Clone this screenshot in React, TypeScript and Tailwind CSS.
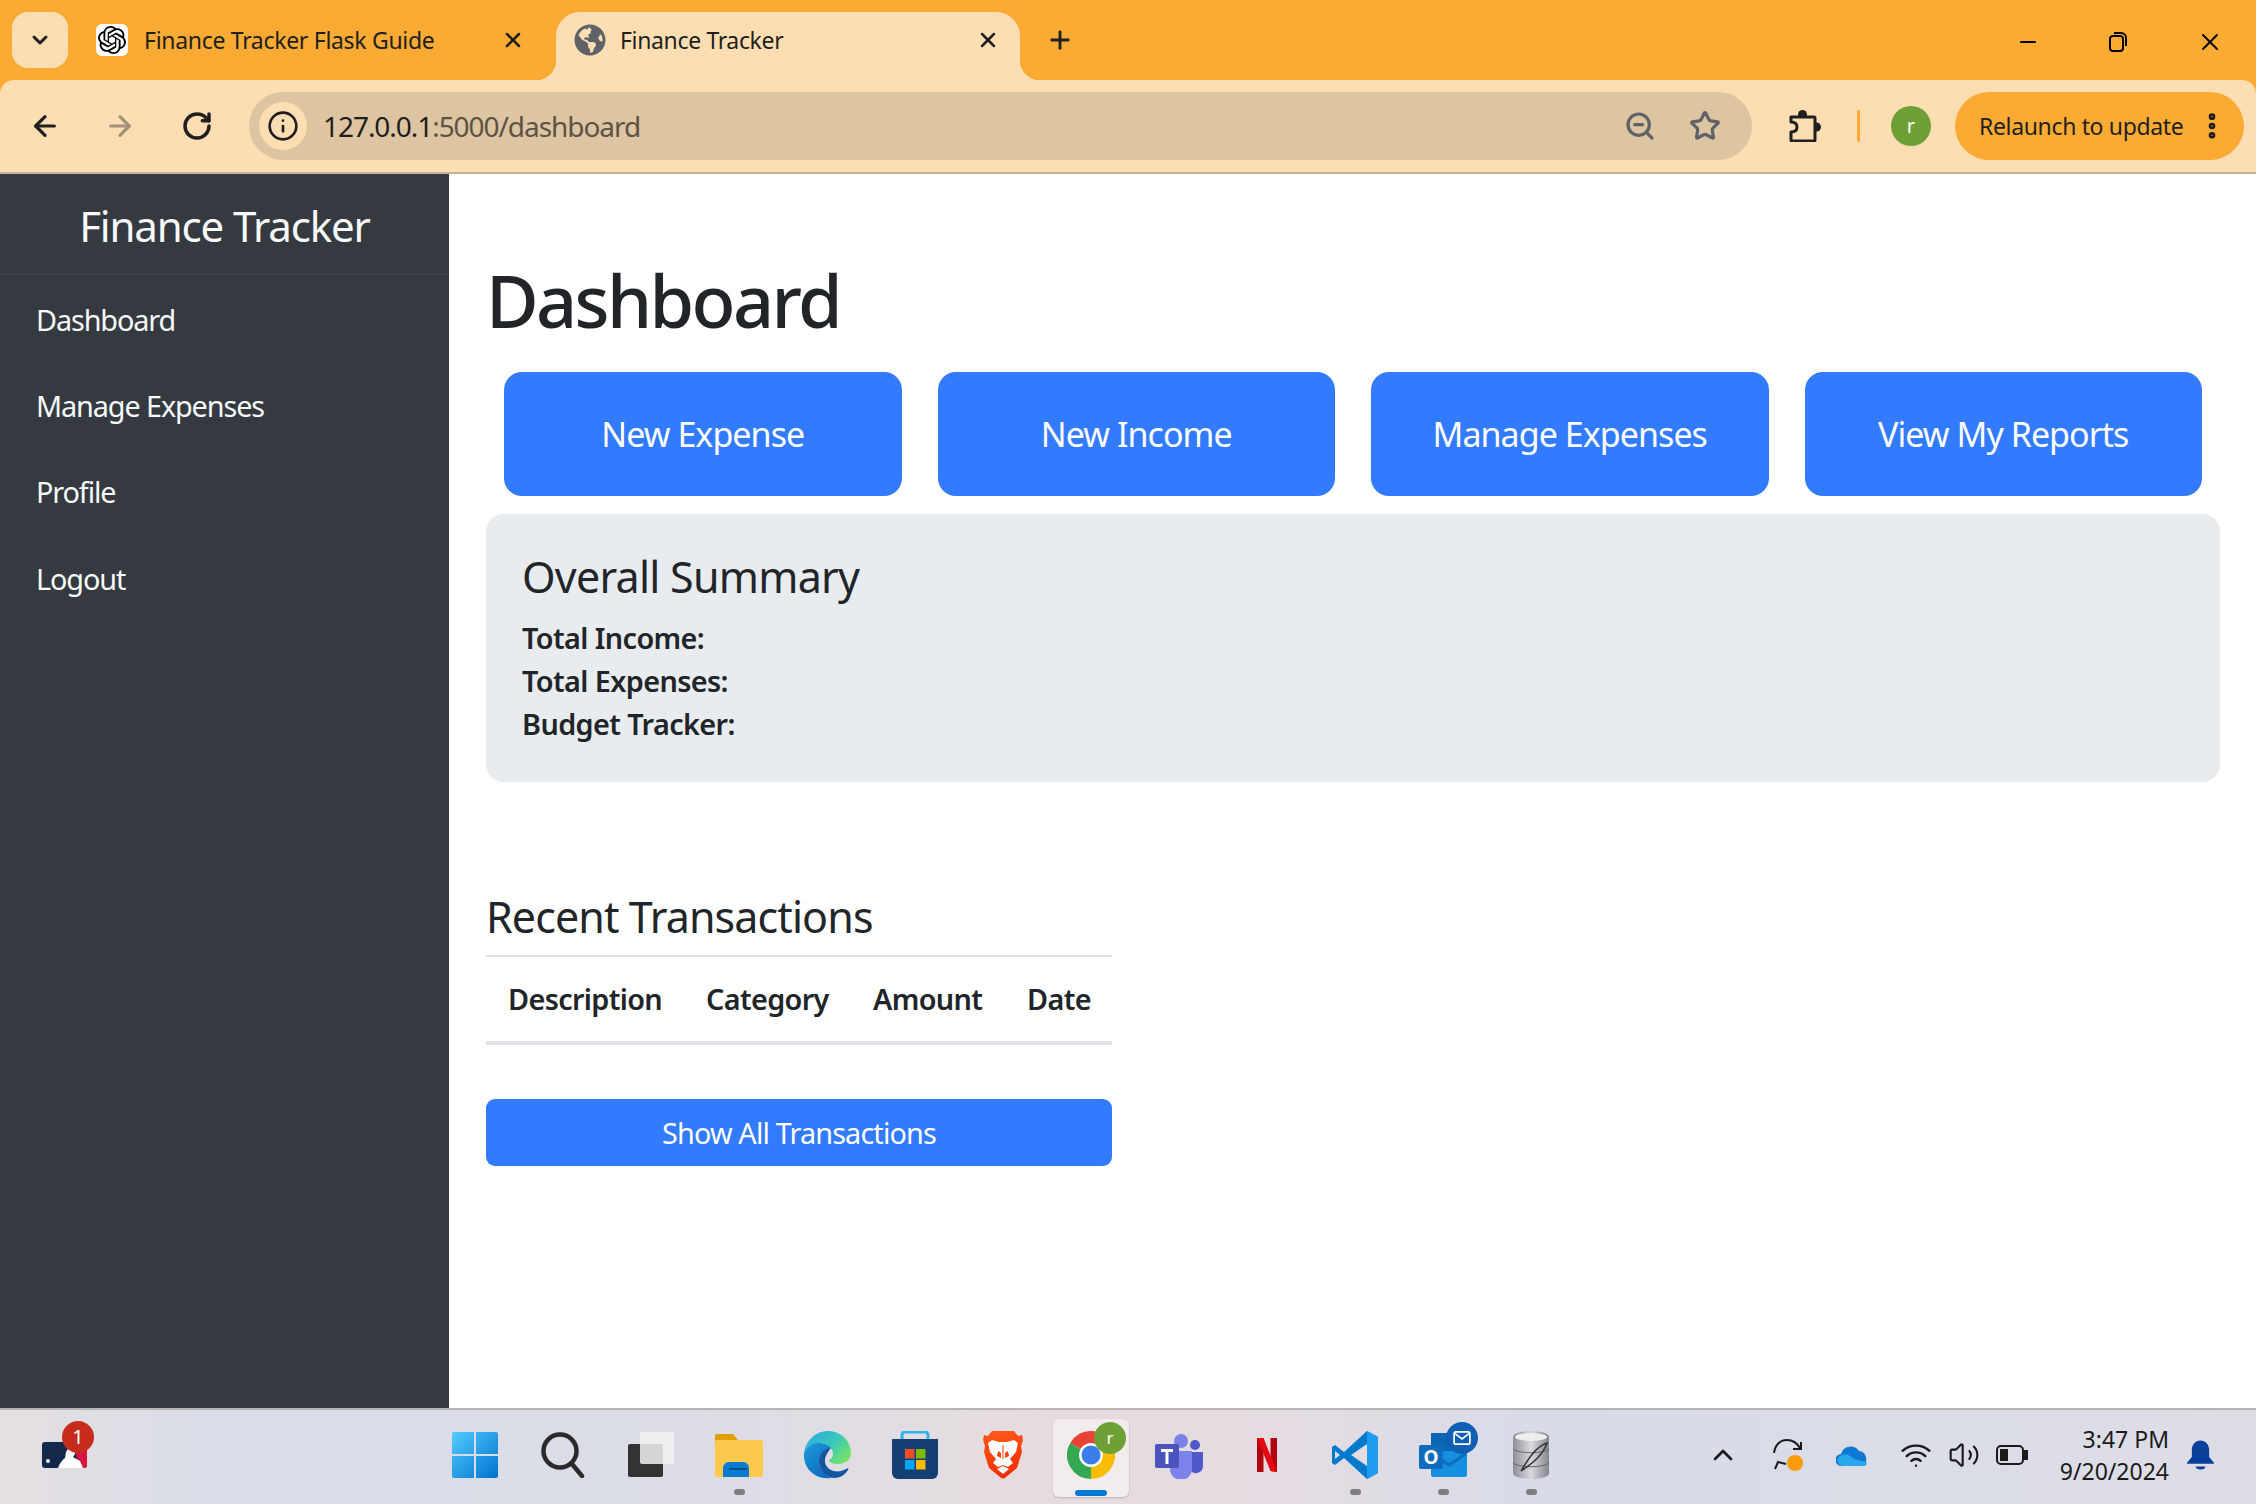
import { ReactNode } from "react";
import {
  ArrowLeft,
  ArrowRight,
  ChevronDown,
  ChevronUp,
  EllipsisVertical,
  Info,
  Minus,
  Plus,
  RotateCw,
  Star,
  Volume2,
  Wifi,
  X,
  ZoomOut,
} from "lucide-react";
import { SiOpenai } from "react-icons/si";
import { FaGlobeAmericas } from "react-icons/fa";

const TabCorners = () => (
  <>
    <span className="absolute bottom-0 left-[-20px] h-5 w-5 bg-[radial-gradient(circle_at_0_0,#fbaa33_20px,#fddeb2_20.5px)]" />
    <span className="absolute bottom-0 right-[-20px] h-5 w-5 bg-[radial-gradient(circle_at_100%_0,#fbaa33_20px,#fddeb2_20.5px)]" />
  </>
);

const TitleBar = () => (
  <div className="flex h-20 shrink-0 items-start bg-[#fbaa33] text-[#1f1f1f]">
    <div className="ml-3 mt-3 flex h-14 w-14 items-center justify-center rounded-2xl bg-[#fddeb2]">
      <ChevronDown className="h-6 w-6" strokeWidth={3} />
    </div>
    <div className="ml-[28px] mt-3 flex h-[68px] w-[460px] items-center pb-3">
      <div className="flex h-8 w-8 items-center justify-center rounded-md bg-white">
        <SiOpenai className="h-7 w-7 text-black" />
      </div>
      <span className="ml-[16px] w-[357px] text-[23px] tracking-[-0.3px]">Finance Tracker Flask Guide</span>
      <X className="h-6 w-6" strokeWidth={2.5} />
    </div>
    <div className="relative mt-3 flex h-[68px] w-[464px] items-center rounded-t-[24px] bg-[#fddeb2] pb-3 pl-[18px]">
      <TabCorners />
      <FaGlobeAmericas className="h-8 w-8 text-[#5f6368]" />
      <span className="ml-[14px] w-[356px] text-[23px] tracking-[-0.35px]">Finance Tracker</span>
      <X className="h-6 w-6" strokeWidth={2.5} />
    </div>
    <Plus className="ml-[26px] mt-[26px] h-7 w-7" strokeWidth={2.5} />
    <div className="ml-auto mr-[32px] mt-[28px] flex items-center gap-[68px] text-black">
      <Minus className="h-6 w-6" strokeWidth={2} />
      <svg viewBox="0 0 20 22" className="h-[22px] w-[20px]" fill="none" stroke="currentColor" strokeWidth="2">
        <rect x="2" y="5" width="13" height="15" rx="3" />
        <path d="M6 2h7a5 5 0 0 1 5 5v8" />
      </svg>
      <X className="h-7 w-7" strokeWidth={1.7} />
    </div>
  </div>
);

const ExtensionIcon = () => (
  <svg viewBox="0 0 32 32" className="ml-[37px] h-8 w-8 text-[#1f1f1f]">
    <circle cx="13.5" cy="4.5" r="4.5" fill="currentColor" />
    <circle cx="27.5" cy="17" r="4.5" fill="currentColor" />
    <path
      d="M2 7h23a1 1 0 0 1 1 1v22a1 1 0 0 1-1 1H3a1 1 0 0 1-1-1v-8c4 0 6-2 6-5s-2-5-6-5V8a1 1 0 0 1 0-1z"
      fill="#fddeb2"
      stroke="currentColor"
      strokeWidth="3"
      strokeLinejoin="round"
    />
  </svg>
);

const Toolbar = () => (
  <div className="h-[94px] shrink-0 border-b-2 border-[#c4b196] bg-[#fbaa33]">
    <div className="flex h-[92px] items-center rounded-t-[14px] bg-[#fddeb2]">
      <ArrowLeft className="ml-[29px] h-8 w-8 text-[#1f1f1f]" strokeWidth={2.4} />
      <ArrowRight className="ml-[43px] h-8 w-8 text-[#a3937b]" strokeWidth={2.4} />
      <RotateCw className="ml-[45px] h-8 w-8 text-[#1f1f1f]" strokeWidth={2.6} />
      <div className="ml-[36px] flex h-[68px] w-[1503px] items-center rounded-[34px] bg-[#ddc5a1]">
        <div className="ml-[10px] flex h-12 w-12 items-center justify-center rounded-full bg-[#fddeb2]">
          <Info className="h-8 w-8 text-[#1f1f1f]" strokeWidth={2} />
        </div>
        <span className="ml-[16px] text-[28px] tracking-[-1.05px] text-[#1f1f1f]">
          127.0.0.1<span className="text-[#5c5245]">:5000/dashboard</span>
        </span>
        <ZoomOut className="ml-auto h-8 w-8 text-[#5f6368]" strokeWidth={2.4} />
        <Star className="ml-[33px] mr-[31px] h-8 w-8 text-[#5f6368]" strokeWidth={2.4} />
      </div>
      <ExtensionIcon />
      <span className="ml-[36px] h-8 w-[3px] rounded-sm bg-[#fbaa33]" />
      <div className="ml-[31px] flex h-10 w-10 items-center justify-center rounded-full bg-[#6fa035] text-[20px] text-white">
        r
      </div>
      <div className="ml-[24px] flex h-[68px] w-[289px] items-center rounded-[34px] bg-[#fbaa33] pl-[24px] text-[#1f1f1f]">
        <span className="text-[23px] tracking-[-0.35px]">Relaunch to update</span>
        <EllipsisVertical className="ml-[13px] h-8 w-8" strokeWidth={3} />
      </div>
    </div>
  </div>
);

const navItems = ["Dashboard", "Manage Expenses", "Profile", "Logout"];

const Sidebar = () => (
  <aside className="w-[449px] shrink-0 bg-[#343a40] text-[#f8f9fa]">
    <div className="flex h-[101px] items-center justify-center border-b border-[#3f454b] pt-[2px] text-[42px] tracking-[-1.15px]">
      Finance Tracker
    </div>
    <nav className="flex flex-col pt-[1px]">
      {navItems.map((item) => (
        <a key={item} className="flex h-[86.4px] items-center pl-[36px] text-[28.8px] tracking-[-1.1px]">
          {item}
        </a>
      ))}
    </nav>
  </aside>
);

const actions = ["New Expense", "New Income", "Manage Expenses", "View My Reports"];
const summary = ["Total Income:", "Total Expenses:", "Budget Tracker:"];
const columns = [
  { label: "Description", width: "w-[198px]" },
  { label: "Category", width: "w-[167px]" },
  { label: "Amount", width: "w-[154px]" },
  { label: "Date", width: "w-[107px]" },
];

const Main = () => (
  <main className="flex-1 pl-[37px] pr-[36px] pt-[83px] text-[#212529]">
    <h1 className="mb-[29px] h-[86px] text-[72px] font-medium leading-[86px] tracking-[-2.6px]">Dashboard</h1>
    <div className="mb-[18px] grid grid-cols-4 gap-[36px] px-[18px]">
      {actions.map((a) => (
        <button key={a} className="h-[124px] rounded-[18px] bg-[#327bff] text-[34px] tracking-[-0.95px] text-white">
          {a}
        </button>
      ))}
    </div>
    <section className="h-[268px] rounded-[18px] bg-[#e9ecef] px-[36px] pt-[37px]">
      <h3 className="mb-[13px] text-[43px] font-normal leading-[52px] tracking-[-0.75px]">Overall Summary</h3>
      {summary.map((s) => (
        <p key={s} className="text-[28.8px] font-semibold leading-[43px] tracking-[-0.6px]">
          {s}
        </p>
      ))}
    </section>
    <div className="mt-[109px] w-[626px]">
      <h3 className="mb-[12px] text-[43px] font-normal leading-[52px] tracking-[-0.9px]">Recent Transactions</h3>
      <table className="w-full table-fixed border-t-2 border-[#dee2e6]">
        <thead>
          <tr className="h-[87px] border-b-[4px] border-[#dee2e6]">
            {columns.map((c) => (
              <th key={c.label} className={`${c.width} pl-[22px] text-left text-[28.8px] font-semibold tracking-[-0.65px]`}>
                {c.label}
              </th>
            ))}
          </tr>
        </thead>
      </table>
      <button className="mt-[54px] h-[67px] w-full rounded-[9px] bg-[#327bff] text-[28.8px] tracking-[-0.85px] text-white">
        Show All Transactions
      </button>
    </div>
  </main>
);

const MlbIcon = () => (
  <svg viewBox="0 0 45 26" className="h-[26px] w-[45px]">
    <rect width="45" height="26" rx="3" fill="#13294b" />
    <path d="M30 0h12a3 3 0 0 1 3 3v20a3 3 0 0 1-3 3h-4z" fill="#d5173f" />
    <path d="M16 26c2-5 4-8 7-10 1-3 0-6 3-9 4-2 8 1 7 5l-2 3 7 4 3 7z" fill="#fff" />
    <circle cx="6" cy="19" r="2" fill="#fff" />
  </svg>
);

const StartIcon = () => (
  <svg viewBox="0 0 46 46" className="h-[46px] w-[46px]">
    <defs>
      <linearGradient id="win" x1="0" y1="0" x2="1" y2="1">
        <stop offset="0" stopColor="#52cdfc" />
        <stop offset="1" stopColor="#0071d1" />
      </linearGradient>
    </defs>
    <path fill="url(#win)" d="M2 0h20v22H0V2a2 2 0 0 1 2-2zM24 0h20a2 2 0 0 1 2 2v20H24zM0 24h22v22H2a2 2 0 0 1-2-2zM24 24h22v20a2 2 0 0 1-2 2H24z" />
  </svg>
);

const SearchIcon = () => (
  <svg viewBox="0 0 46 46" className="h-[46px] w-[46px]" fill="none" stroke="#2a2a2a" strokeWidth="4.5" strokeLinecap="round">
    <circle cx="20" cy="19" r="16.5" />
    <path d="M32 32l10 12" />
  </svg>
);

const TaskViewIcon = () => (
  <svg viewBox="0 0 46 46" className="h-[46px] w-[46px]">
    <rect x="0" y="12" width="35" height="33" rx="2" fill="#333" />
    <rect x="12" y="0" width="35" height="32" rx="2" fill="#f2f2f2" opacity="0.85" />
  </svg>
);

const ExplorerIcon = () => (
  <svg viewBox="0 0 48 44" className="h-[44px] w-[48px]">
    <path d="M0 3a2 2 0 0 1 2-2h16l5 6v2H0z" fill="#e0a100" />
    <rect y="7" width="48" height="37" rx="2" fill="#fdc94f" />
    <path d="M8 44V35a6 6 0 0 1 6-6h14a6 6 0 0 1 6 6v9z" fill="#0a7bd0" />
    <rect x="14" y="35" width="18" height="2" fill="#0a4f8c" />
  </svg>
);

const EdgeIcon = () => (
  <svg viewBox="0 0 48 48" className="h-12 w-12">
    <defs>
      <linearGradient id="edgeA" x1="0" y1="0" x2="1" y2="0.7">
        <stop offset="0" stopColor="#2aa7de" />
        <stop offset="0.55" stopColor="#37c6c0" />
        <stop offset="1" stopColor="#74e26a" />
      </linearGradient>
      <linearGradient id="edgeB" x1="0" y1="0" x2="0.7" y2="1">
        <stop offset="0" stopColor="#1d9bdc" />
        <stop offset="1" stopColor="#0c6bc0" />
      </linearGradient>
    </defs>
    <path d="M1 22C3 9 13 0 25 0c13 0 23 10 23 22 0 7-6 11-13 11-5 0-9-2-9-4 4-2 5-6 3-10-3-6-10-8-17-6-5 1-9 4-11 9z" fill="url(#edgeA)" />
    <path d="M1 22c3-7 10-11 17-10 5 1 9 3 10 5-8 1-13 7-12 15 1 7 5 12 12 15C12 49 0 38 1 22z" fill="url(#edgeB)" />
    <path d="M28 17c-8 0-13 7-12 15 1 8 7 15 15 15 6 0 11-3 14-8 1-2 0-2-2-1-5 3-11 3-15 1-6-3-8-10-4-16 1-2 3-5 4-6z" fill="#14569f" />
  </svg>
);

const StoreIcon = () => (
  <svg viewBox="0 0 46 48" className="h-12 w-[46px]">
    <path d="M10 10V4a3 3 0 0 1 3-3h20a3 3 0 0 1 3 3v6" fill="none" stroke="#2bb4ea" strokeWidth="3" />
    <path d="M0 8h46v34a6 6 0 0 1-6 6H6a6 6 0 0 1-6-6z" fill="#153f74" />
    <rect x="13" y="18" width="9.5" height="9.5" fill="#f25022" />
    <rect x="24" y="18" width="9.5" height="9.5" fill="#7fba00" />
    <rect x="13" y="29" width="9.5" height="9.5" fill="#00a4ef" />
    <rect x="24" y="29" width="9.5" height="9.5" fill="#ffb900" />
  </svg>
);

const BraveIcon = () => (
  <svg viewBox="0 0 40 48" className="h-12 w-10">
    <defs>
      <linearGradient id="brave" x1="0" y1="0" x2="0.2" y2="1">
        <stop offset="0" stopColor="#ff5a1a" />
        <stop offset="1" stopColor="#f52f05" />
      </linearGradient>
    </defs>
    <path d="M9 0h22l4 5 4-1 1 5-2 6 1 6-5 16-11 9c-2 2-4 2-6 0L6 37 1 21l1-6-2-6 1-5 4 1z" fill="url(#brave)" />
    <path d="M9 9l7 2h8l7-2 4 3-2 9-6 7 3 4-5 4-5-2-5 2-5-4 3-4-6-7-2-9z" fill="#fff" />
    <path d="M15 20l3 2v5l-4-2zM25 20l-3 2v5l4-2zM19.5 14h1v14h-1z" fill="#f5410c" />
    <path d="M14 38l6-3 6 3-6 5z" fill="#fff" />
  </svg>
);

const ChromeIcon = () => (
  <svg viewBox="0 0 48 48" className="h-12 w-12">
    <path d="M24 24L3.2 12A24 24 0 0 1 44.8 12z" fill="#ea4335" />
    <path d="M24 24L3.2 12A24 24 0 0 0 24 48z" fill="#34a853" />
    <path d="M24 24L24 48A24 24 0 0 0 44.8 12z" fill="#fbbc04" />
    <circle cx="24" cy="24" r="12" fill="#fff" />
    <circle cx="24" cy="24" r="9.5" fill="#3b7de9" />
  </svg>
);

const TeamsIcon = () => (
  <svg viewBox="0 0 48 48" className="h-12 w-12">
    <circle cx="40" cy="14" r="5" fill="#5059c9" />
    <path d="M34 21h14v14a7 7 0 0 1-12 5z" fill="#5059c9" />
    <circle cx="26" cy="10" r="7" fill="#7b83eb" />
    <path d="M15 20h22v18a11 11 0 0 1-22 0z" fill="#7b83eb" />
    <rect x="0" y="13" width="24" height="24" rx="2" fill="#4b53bc" />
    <path d="M6 18h12v3h-4.5v12h-3V21H6z" fill="#fff" />
  </svg>
);

const NetflixIcon = () => (
  <svg viewBox="0 0 20 34" className="h-[34px] w-5">
    <path d="M0 0h6.5v34L0 34z" fill="#b1060f" />
    <path d="M13.5 0H20v34l-6.5-1z" fill="#b1060f" />
    <path d="M0 0h6.5L20 34l-6.5-1z" fill="#e50914" />
  </svg>
);

const VSCodeIcon = () => (
  <svg viewBox="0 0 48 48" className="h-12 w-12">
    <path d="M47 6v36L36 48 13 27 4 34 1 32v-16l3-2 9 7L36 0z" fill="#007acc" />
    <path d="M36 0l11 6v36l-11 6z" fill="#1f9cf0" />
    <path d="M36 13L20 24l16 11z" fill="#e3dde2" />
    <path d="M4 20l5 4-5 4z" fill="#e3dde2" />
  </svg>
);

const OutlookIcon = () => (
  <svg viewBox="0 0 48 44" className="h-[44px] w-12">
    <rect x="12" y="0" width="30" height="24" fill="#0a65b5" />
    <path d="M12 18h36v24a2 2 0 0 1-2 2H14a2 2 0 0 1-2-2z" fill="#1490df" />
    <path d="M12 18l18 12 18-12v4L30 34 12 22z" fill="#0e6fbd" />
    <rect x="0" y="12" width="24" height="24" rx="2" fill="#0f6cbd" />
    <text x="12" y="31" textAnchor="middle" fontSize="19" fontWeight="700" fill="#fff">O</text>
  </svg>
);

const DbIcon = () => (
  <svg viewBox="0 0 36 48" className="h-12 w-9">
    <defs>
      <linearGradient id="db" x1="0" y1="0" x2="1" y2="0">
        <stop offset="0" stopColor="#8e8e96" />
        <stop offset="0.5" stopColor="#d9d9de" />
        <stop offset="1" stopColor="#85858c" />
      </linearGradient>
    </defs>
    <path d="M0 6c0-8 36-8 36 0v36c0 8-36 8-36 0z" fill="url(#db)" />
    <ellipse cx="18" cy="6" rx="16" ry="4" fill="#eee" />
    <path d="M0 18c6 5 30 5 36 0M0 32c6 5 30 5 36 0" fill="none" stroke="#666" strokeWidth="1" />
    <path d="M8 40C14 30 22 16 34 12 30 24 20 32 8 40z" fill="none" stroke="#333" strokeWidth="1.5" />
  </svg>
);

const apps: { icon: ReactNode; running?: boolean; active?: boolean; badge?: ReactNode }[] = [
  { icon: <StartIcon /> },
  { icon: <SearchIcon /> },
  { icon: <TaskViewIcon /> },
  { icon: <ExplorerIcon />, running: true },
  { icon: <EdgeIcon /> },
  { icon: <StoreIcon /> },
  { icon: <BraveIcon /> },
  {
    icon: <ChromeIcon />,
    active: true,
    badge: <span className="flex h-8 w-8 items-center justify-center rounded-full bg-[#6fa035] text-[17px] text-white">r</span>,
  },
  { icon: <TeamsIcon /> },
  { icon: <NetflixIcon /> },
  { icon: <VSCodeIcon />, running: true },
  {
    icon: <OutlookIcon />,
    running: true,
    badge: (
      <span className="flex h-8 w-8 items-center justify-center rounded-full bg-[#0f5fb4]">
        <svg viewBox="0 0 20 16" className="h-[14px] w-[18px]" fill="none" stroke="#fff" strokeWidth="2">
          <rect x="1" y="1" width="18" height="14" rx="2" />
          <path d="M2 3l8 6 8-6" />
        </svg>
      </span>
    ),
  },
  { icon: <DbIcon />, running: true },
];

const Taskbar = () => (
  <footer className="flex h-[96px] shrink-0 items-center border-t-2 border-[#b5b3b4] bg-[linear-gradient(90deg,#e5dfe2_0%,#d8dde8_10%,#dcdde6_30%,#e6dcdf_47%,#e3dce2_58%,#d8dce8_68%,#dddde5_100%)] pb-[4px] text-[#1a1a1a]">
    <div className="w-[431px] pl-[42px]">
      <div className="relative h-[26px] w-[45px]">
        <MlbIcon />
        <span className="absolute left-[20px] top-[-21px] flex h-8 w-8 items-center justify-center rounded-full bg-[#c62c1c] text-[20px] text-white">
          1
        </span>
      </div>
    </div>
    <div className="flex h-full">
      {apps.map((app, i) => (
        <div key={i} className="relative flex h-full w-[88px] items-center justify-center">
          {app.active && (
            <span className="absolute bottom-[3px] left-[6px] right-[6px] top-[9px] rounded-md bg-[#f2ecec] shadow-[0_1px_2px_#b9b2b4]" />
          )}
          <span className="relative">{app.icon}</span>
          {app.badge && <span className="absolute left-[47px] top-[12px]">{app.badge}</span>}
          {app.running && <span className="absolute bottom-[5px] h-[6px] w-[11px] rounded-full bg-[#807e80]" />}
          {app.active && <span className="absolute bottom-[4px] h-[6px] w-8 rounded-full bg-[#0078d4]" />}
        </div>
      ))}
    </div>
    <div className="ml-[132px] flex items-center">
      <ChevronUp className="h-8 w-8 text-[#1a1a1a]" strokeWidth={2} />
      <svg viewBox="0 0 32 32" className="ml-[33px] h-8 w-8" fill="none" stroke="#1a1a1a" strokeWidth="2">
        <path d="M2 14C3 6 8 1 15 1c6 0 10 3 13 8M29 3v7h-8M3 30l3-7 8 2" />
        <circle cx="23" cy="24" r="8" fill="#fb9a0a" stroke="none" />
      </svg>
      <svg viewBox="0 0 32 22" className="ml-[32px] h-[22px] w-8">
        <path d="M6 22a6 6 0 0 1-1-12 10 10 0 0 1 18-3 8 8 0 0 1 3 15z" fill="#0f78d4" />
        <path d="M6 22c-6-3-6-9 0-11 6-2 8 1 12 4l12 3c2 2 0 4-3 4z" fill="#28a8ea" />
      </svg>
      <Wifi className="ml-[32px] h-8 w-8" strokeWidth={1.8} />
      <Volume2 className="ml-[16px] h-8 w-8" strokeWidth={1.6} />
      <svg viewBox="0 0 32 20" className="ml-[16px] h-5 w-8" fill="none" stroke="#1a1a1a" strokeWidth="2">
        <rect x="1" y="1" width="26" height="18" rx="4" />
        <rect x="4" y="4" width="8" height="12" fill="#1a1a1a" stroke="none" />
        <path d="M29 6h2v8h-2z" fill="#1a1a1a" />
      </svg>
      <div className="ml-[22px] w-[119px] text-right text-[23px] leading-[32px]">
        <div>3:47 PM</div>
        <div>9/20/2024</div>
      </div>
      <svg viewBox="0 0 28 30" className="ml-[18px] h-[30px] w-[27px]" fill="#0a3f9c">
        <path d="M14 0c5 0 9 4 9 10v7l5 6v1H0v-1l5-6v-7C5 4 9 0 14 0z" />
        <path d="M9 27h10a5 3 0 0 1-10 0z" />
      </svg>
    </div>
  </footer>
);

export default function App() {
  return (
    <div className="flex h-[1504px] w-[2256px] flex-col overflow-hidden bg-white font-['Noto_Sans',sans-serif]">
      <TitleBar />
      <Toolbar />
      <div className="flex min-h-0 flex-1">
        <Sidebar />
        <Main />
      </div>
      <Taskbar />
    </div>
  );
}
